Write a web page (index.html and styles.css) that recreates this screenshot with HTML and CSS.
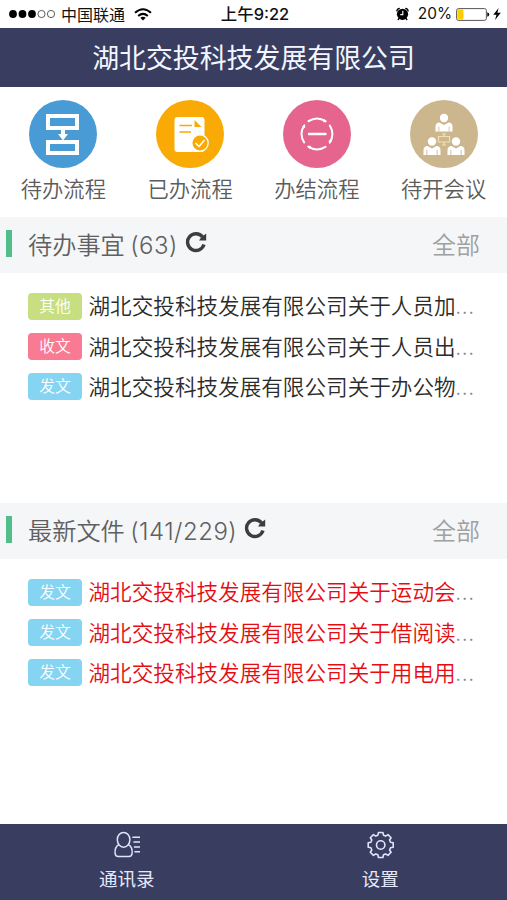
FILE: index.html
```html
<!DOCTYPE html>
<html lang="zh-CN">
<head>
<meta charset="utf-8">
<meta name="viewport" content="width=device-width, initial-scale=1">
<title>湖北交投科技发展有限公司</title>
<link rel="stylesheet" href="styles.css">
</head>
<body>
<div class="status">
  <div class="status-left">
    <svg width="47" height="10" viewBox="0 0 47 10"><g fill="#000"><circle cx="4" cy="5" r="3.9"/><circle cx="13.5" cy="5" r="3.9"/><circle cx="23" cy="5" r="3.9"/></g><g fill="none" stroke="#333" stroke-width=".8"><circle cx="32.5" cy="5" r="3.6"/><circle cx="42" cy="5" r="3.6"/></g></svg>
    <span class="carrier">中国联通</span>
    <svg width="18" height="13" viewBox="0 0 18 13"><g fill="none" stroke="#000" stroke-width="2"><path d="M1 4.8Q9-2.2 17 4.8"/><path d="M4.2 8Q9 3.8 13.8 8"/></g><path d="M6.3 9.8Q9 7.8 11.7 9.8L9 12.6Z"/></svg>
  </div>
  <span class="time">上午9:22</span>
  <div class="status-right">
    <svg width="13" height="14" viewBox="0 0 13 14"><circle cx="6.5" cy="7.3" r="5.6"/><path d="M.7 4.4Q1 1.6 3.8 1.3M12.3 4.4Q12 1.6 9.2 1.3M3 11.5L1.8 13M10 11.5L11.2 13" fill="none" stroke="#000" stroke-width="1.3"/><path d="M6.8 3.8V7.6H4.3" fill="none" stroke="#fff" stroke-width="1.1"/></svg>
    <span class="percent">20%</span>
    <svg class="battery" width="34" height="13" viewBox="0 0 34 13"><rect x=".6" y=".6" width="29.8" height="11.8" rx="2" fill="#fff" stroke="#555"/><rect x="1.4" y="1.4" width="6" height="10.2" rx="1" fill="#fc0"/><path d="M31.3 4.2Q33.2 4.6 33.2 6.5T31.3 8.8Z"/></svg>
    <svg width="8" height="12" viewBox="0 0 8 12"><path d="M5.6 0L.3 6.8H3.5L2 12L7.8 4.8H4.4Z"/></svg>
  </div>
</div>
<header class="header"><h1>湖北交投科技发展有限公司</h1></header>
<nav class="shortcuts">
  <a class="shortcut"><svg width="68" height="68" viewBox="0 0 68 68"><circle cx="34" cy="34" r="34" fill="#499bd5"/><g fill="none" stroke="#fff" stroke-width="4"><rect x="19" y="16" width="29" height="12"/><rect x="19" y="42" width="29" height="11"/></g><path d="M32 29H36V34H39L34 40.5L29 34H32Z" fill="#fff"/></svg><span>待办流程</span></a>
  <a class="shortcut"><svg width="68" height="68" viewBox="0 0 68 68"><circle cx="34" cy="34" r="34" fill="#f9aa04"/><rect x="18.5" y="17" width="30" height="35" rx="3" fill="#fff"/><path d="M38.5 20V27H45.5Z" fill="#f9aa04"/><path d="M23.5 25.5H36M23.5 32H35" stroke="#f9aa04" stroke-width="1.4"/><circle cx="44" cy="43" r="8.2" fill="#f9aa04" stroke="#fff" stroke-width="1.3"/><path d="M39.5 43L43 46.5L48.5 40" fill="none" stroke="#fff" stroke-width="1.5"/></svg><span>已办流程</span></a>
  <a class="shortcut"><svg width="68" height="68" viewBox="0 0 68 68"><circle cx="34" cy="34" r="34" fill="#e5658f"/><g fill="none" stroke="#fff" stroke-width="2" stroke-linecap="round"><path d="M25.5 21.2Q34 15.8 42.5 21.2"/><path d="M46.8 25.5Q52 34 46.8 42.5"/><path d="M42.5 46.8Q34 52 25.5 46.8"/><path d="M21.2 42.5Q15.8 34 21.2 25.5"/><path d="M26 34H42.5" stroke-width="2.4"/></g><path d="M41 18.8L44 22L40 22.2ZM49.2 41L46 44L45.8 40ZM27 49.2L24 46L28 45.8ZM18.8 27L22 24L22.2 28Z" fill="#fff"/></svg><span>办结流程</span></a>
  <a class="shortcut"><svg width="68" height="68" viewBox="0 0 68 68"><defs><g id="person"><circle cy="4" r="4.2"/><path d="M-8.5 17.5V12.5Q-8.5 8.8-4.5 8.5L0 11L4.5 8.5Q8.5 8.8 8.5 12.5V17.5Z"/><path d="M-5.2 12.5V17.5M5.2 12.5V17.5" stroke="#cbb68d" stroke-width=".8"/></g></defs><circle cx="34" cy="34" r="34" fill="#cbb68d"/><g fill="#fff"><use href="#person" x="34" y="14"/><use href="#person" x="22" y="37.5"/><use href="#person" x="46" y="37.5"/></g><path d="M28.5 36.5H39.5V42H28.5ZM34 33.5V36.5M34 42V45M32 34H36M32 45H36" fill="none" stroke="#f3dfb2" stroke-width="1.2"/></svg><span>待开会议</span></a>
</nav>
<section class="panel">
  <div class="panel-head">
    <h2>待办事宜 <span class="count">(63)</span></h2>
    <svg class="refresh" width="22" height="22" viewBox="0 0 22 22"><path d="M19 13.6A8.4 8.4 0 1 1 17.6 5.9" fill="none" stroke="#3d3d3f" stroke-width="3.4"/><path d="M21.2 2.6V9.4H14L15.6 7.2L18.4 4.8Z" fill="#3d3d3f"/></svg>
    <a class="all">全部</a>
  </div>
  <ul class="list">
    <li><span class="tag other">其他</span><span class="text">湖北交投科技发展有限公司关于人员加</span><span class="dots">...</span></li>
    <li><span class="tag receive">收文</span><span class="text">湖北交投科技发展有限公司关于人员出</span><span class="dots">...</span></li>
    <li><span class="tag send">发文</span><span class="text">湖北交投科技发展有限公司关于办公物</span><span class="dots">...</span></li>
  </ul>
</section>
<section class="panel files">
  <div class="panel-head">
    <h2>最新文件 <span class="count">(141/229)</span></h2>
    <svg class="refresh" width="22" height="22" viewBox="0 0 22 22"><path d="M19 13.6A8.4 8.4 0 1 1 17.6 5.9" fill="none" stroke="#3d3d3f" stroke-width="3.4"/><path d="M21.2 2.6V9.4H14L15.6 7.2L18.4 4.8Z" fill="#3d3d3f"/></svg>
    <a class="all">全部</a>
  </div>
  <ul class="list unread">
    <li><span class="tag send">发文</span><span class="text">湖北交投科技发展有限公司关于运动会</span><span class="dots">...</span></li>
    <li><span class="tag send">发文</span><span class="text">湖北交投科技发展有限公司关于借阅读</span><span class="dots">...</span></li>
    <li><span class="tag send">发文</span><span class="text">湖北交投科技发展有限公司关于用电用</span><span class="dots">...</span></li>
  </ul>
</section>
<footer class="tabs">
  <a class="tab"><svg width="28" height="28" viewBox="-14 -14 28 28"><g fill="none" stroke="#dfe3fb" stroke-width="1.5"><ellipse cx="-3.4" cy="-5.2" rx="6.3" ry="7.4"/><path d="M-8.2-.4C-11.1 1.2-12.2 4.3-11.9 8.3Q-11.7 11.6-8.6 11.6H1.8Q4.9 11.6 5.1 8.3C5.4 4.3 4.3 1.2 1.4-.4"/><path d="M5.4-7.7H13M6.4-2.9H13M6.9 2H13M7.4 6.8H13"/></g></svg><span>通讯录</span></a>
  <a class="tab"><svg width="28" height="28" viewBox="-14.7 -14 28 28"><g fill="none" stroke="#dfe3fb" stroke-width="1.6" stroke-linejoin="round"><path d="M-2.8-9.8L-2.2-12.5H2.2L2.8-9.8L4.95-8.9L7.27-10.38L10.38-7.27L8.9-4.95L9.8-2.8L12.5-2.2V2.2L9.8 2.8L8.9 4.95L10.38 7.27L7.27 10.38L4.95 8.9L2.8 9.8L2.2 12.5H-2.2L-2.8 9.8L-4.95 8.9L-7.27 10.38L-10.38 7.27L-8.9 4.95L-9.8 2.8L-12.5 2.2V-2.2L-9.8-2.8L-8.9-4.95L-10.38-7.27L-7.27-10.38L-4.95-8.9Z"/><circle r="4.2"/></g></svg><span>设置</span></a>
</footer>
</body>
</html>
```
FILE: styles.css
```css
* { box-sizing: border-box; }
body {
  margin: 0;
  height: 900px;
  display: flex;
  flex-direction: column;
  overflow: hidden;
  background: #fff;
  font-family: "Noto Sans CJK SC", sans-serif;
}
svg { display: block; flex: none; }
h1, h2, ul { margin: 0; padding: 0; font-weight: 400; }

.status {
  height: 28px;
  flex: none;
  display: grid;
  grid-template-columns: 1fr auto 1fr;
  align-items: center;
  padding: 0 6px 0 9px;
  font-size: 16px;
  line-height: 28px;
  color: #111;
}
.status-left, .status-right { display: flex; align-items: center; }
.status-left { gap: 5px; }
.status-left svg:last-child { margin-left: 4px; }
.status-right { justify-content: flex-end; }
.time { font-family: Inter, "Noto Sans CJK SC", sans-serif; font-size: 16.4px; font-weight: 500; }
.percent { margin: 0 4px 0 9px; font-family: Inter, sans-serif; font-size: 15.4px; }
.battery { margin-right: 3px; }

.header {
  height: 59px;
  flex: none;
  background: #393e60;
  color: #f4f6ff;
  text-align: center;
}
.header h1 { font-size: 26.9px; line-height: 57px; }

.shortcuts {
  height: 130px;
  flex: none;
  display: grid;
  grid-template-columns: repeat(4, 1fr);
  padding-top: 13px;
}
.shortcut {
  display: flex;
  flex-direction: column;
  align-items: center;
  font-size: 21.3px;
  line-height: 40px;
  font-weight: 350;
  color: #5c5c5c;
}

.panel { height: 286px; flex: none; }
.panel.files { flex: 1; height: auto; }
.panel-head {
  height: 56px;
  display: flex;
  align-items: center;
  padding: 0 27px 0 6px;
  background: #f5f6f8;
}
.panel-head::before {
  content: "";
  width: 6px;
  height: 27px;
  margin: -3px 16px 0 0;
  background: #50bd8b;
}
.panel-head h2 {
  height: 56px;
  font-size: 24.2px;
  line-height: 53px;
  font-weight: 350;
  color: #606060;
}
.count {
  font-family: Inter, sans-serif;
  font-size: 24px;
  font-weight: 300;
  letter-spacing: .5px;
}
.refresh { margin: -6px 0 0 7px; }
.all {
  height: 56px;
  margin-left: auto;
  font-size: 24px;
  line-height: 53px;
  font-weight: 350;
  color: #a0a0a0;
}

.list { list-style: none; padding: 13px 0 0 28px; }
.list li {
  height: 40.4px;
  display: flex;
  align-items: center;
  font-size: 21.6px;
  line-height: 40px;
  color: #2b2b2b;
  white-space: nowrap;
}
.text { font-weight: 350; }
.text, .dots { margin-top: -2px; }
.tag {
  width: 54px;
  height: 27px;
  margin-right: 6.5px;
  border-radius: 4px;
  font-size: 15.8px;
  line-height: 26px;
  font-weight: 350;
  text-align: center;
  color: #fff;
}
.other { background: #c7df81; }
.receive { background: #f87a93; }
.send { background: #85d4f2; }
.unread .text { color: #e60c12; }
.dots { font-weight: 300; color: #888; letter-spacing: 1px; }

.tabs {
  height: 76px;
  flex: none;
  display: grid;
  grid-template-columns: 1fr 1fr;
  padding-top: 7px;
  background: #393e60;
}
.tab {
  display: flex;
  flex-direction: column;
  align-items: center;
  font-size: 18.5px;
  line-height: 38px;
  color: #e6e9fb;
}
```
